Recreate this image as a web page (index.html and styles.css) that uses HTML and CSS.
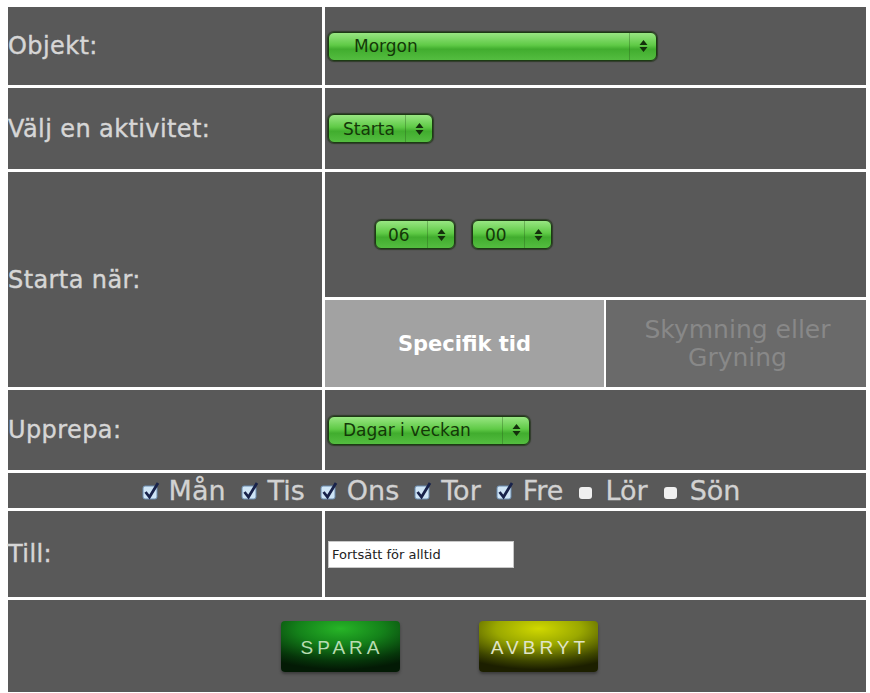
FILE: index.html
```html
<!DOCTYPE html>
<html lang="sv">
<head>
  <meta charset="UTF-8">
  <title>Schema</title>
  <link rel="stylesheet" href="styles.css">
</head>
<body>
  <div id="schedule">

    <div class="cell label">Objekt:</div>
    <div class="cell field">
      <div class="pick pick-wide"><span class="pick-text">Morgon</span><span class="pick-arrows"><svg width="9" height="14" viewBox="0 0 9 14"><path d="M4.5 1 L8.5 6 H0.5Z M4.5 13 L8.5 8 H0.5Z" fill="#14300c"/></svg></span></div>
    </div>

    <div class="cell label">Välj en aktivitet:</div>
    <div class="cell field">
      <div class="pick pick-start"><span class="pick-text">Starta</span><span class="pick-arrows"><svg width="9" height="14" viewBox="0 0 9 14"><path d="M4.5 1 L8.5 6 H0.5Z M4.5 13 L8.5 8 H0.5Z" fill="#14300c"/></svg></span></div>
    </div>

    <div class="cell label">Starta när:</div>
    <div class="when">
      <div class="cell time">
        <div class="pick pick-time"><span class="pick-text">06</span><span class="pick-arrows"><svg width="9" height="14" viewBox="0 0 9 14"><path d="M4.5 1 L8.5 6 H0.5Z M4.5 13 L8.5 8 H0.5Z" fill="#14300c"/></svg></span></div>
        <div class="pick pick-time"><span class="pick-text">00</span><span class="pick-arrows"><svg width="9" height="14" viewBox="0 0 9 14"><path d="M4.5 1 L8.5 6 H0.5Z M4.5 13 L8.5 8 H0.5Z" fill="#14300c"/></svg></span></div>
      </div>
      <div class="tabs">
        <div class="tab tab-on">Specifik tid</div>
        <div class="tab tab-off">Skymning eller<br>Gryning</div>
      </div>
    </div>

    <div class="cell label">Upprepa:</div>
    <div class="cell field">
      <div class="pick pick-repeat"><span class="pick-text">Dagar i veckan</span><span class="pick-arrows"><svg width="9" height="14" viewBox="0 0 9 14"><path d="M4.5 1 L8.5 6 H0.5Z M4.5 13 L8.5 8 H0.5Z" fill="#14300c"/></svg></span></div>
    </div>

    <div class="cell days">
      <span class="day"><svg class="box" width="18" height="19" viewBox="0 0 18 19"><rect x="1" y="5" width="14" height="13" rx="2" fill="#cfe5f6" stroke="#6a8cb0"/><path d="M3.5 11 L7.5 16 L16 2" fill="none" stroke="#18224a" stroke-width="2.8"/></svg>Mån</span>
      <span class="day"><svg class="box" width="18" height="19" viewBox="0 0 18 19"><rect x="1" y="5" width="14" height="13" rx="2" fill="#cfe5f6" stroke="#6a8cb0"/><path d="M3.5 11 L7.5 16 L16 2" fill="none" stroke="#18224a" stroke-width="2.8"/></svg>Tis</span>
      <span class="day"><svg class="box" width="18" height="19" viewBox="0 0 18 19"><rect x="1" y="5" width="14" height="13" rx="2" fill="#cfe5f6" stroke="#6a8cb0"/><path d="M3.5 11 L7.5 16 L16 2" fill="none" stroke="#18224a" stroke-width="2.8"/></svg>Ons</span>
      <span class="day"><svg class="box" width="18" height="19" viewBox="0 0 18 19"><rect x="1" y="5" width="14" height="13" rx="2" fill="#cfe5f6" stroke="#6a8cb0"/><path d="M3.5 11 L7.5 16 L16 2" fill="none" stroke="#18224a" stroke-width="2.8"/></svg>Tor</span>
      <span class="day"><svg class="box" width="18" height="19" viewBox="0 0 18 19"><rect x="1" y="5" width="14" height="13" rx="2" fill="#cfe5f6" stroke="#6a8cb0"/><path d="M3.5 11 L7.5 16 L16 2" fill="none" stroke="#18224a" stroke-width="2.8"/></svg>Fre</span>
      <span class="day"><svg class="box" width="18" height="19" viewBox="0 0 18 19"><rect x="1" y="6" width="13" height="12" rx="3" fill="#f0f0f0"/></svg>Lör</span>
      <span class="day"><svg class="box" width="18" height="19" viewBox="0 0 18 19"><rect x="1" y="6" width="13" height="12" rx="3" fill="#f0f0f0"/></svg>Sön</span>
    </div>

    <div class="cell label">Till:</div>
    <div class="cell field">
      <div class="until">Fortsätt för alltid</div>
    </div>

    <div class="cell actions">
      <div class="btn btn-save">SPARA</div>
      <div class="btn btn-cancel">AVBRYT</div>
    </div>

  </div>
</body>
</html>
```

FILE: styles.css
```css
body {
  margin: 0;
  padding: 0;
  background-color: white;
  font-family: "DejaVu Sans", Verdana, sans-serif;
}

#schedule {
  display: grid;
  grid-template-columns: 314px 541px;
  grid-template-rows: 78px 81px 215px 80px 35px 86px 92px;
  gap: 3px;
  padding: 7px 0 0 8px;
}

.cell {
  background-color: #595959;
}

.label {
  display: flex;
  align-items: center;
  font-size: 24px;
  letter-spacing: 0.4px;
  color: #d6d6d6;
  -webkit-text-stroke: 0.4px #d6d6d6;
}

.field {
  display: flex;
  align-items: center;
  padding-left: 3px;
}

/* green mac style dropdowns */
.pick {
  display: flex;
  align-items: center;
  height: 27px;
  border: 1px solid #1d3a14;
  border-radius: 6px;
  background: linear-gradient(#98e682 0%, #5fca46 45%, #41ad2e 60%, #54bd40 100%);
  box-shadow: 0 0 1px 1px rgba(20, 40, 10, 0.6);
  color: #143808;
  font-size: 17px;
}

.pick-text {
  flex: 1;
  padding-left: 14px;
}

.pick-arrows {
  display: flex;
  align-items: center;
  justify-content: center;
  width: 26px;
  height: 100%;
  border-left: 1px solid rgba(40, 90, 25, 0.35);
}

.pick-wide {
  width: 327px;
}

.pick-wide .pick-text {
  padding-left: 25px;
}

.pick-start {
  width: 103px;
}

.pick-time {
  width: 78px;
}

.pick-time .pick-text {
  padding-left: 12px;
}

.pick-repeat {
  width: 200px;
}

.when {
  display: grid;
  grid-template-rows: 125px 87px;
  gap: 3px;
}

.time {
  display: flex;
  align-items: center;
  gap: 17px;
  padding-left: 50px;
}

.tabs {
  display: grid;
  grid-template-columns: 279px 260px;
  gap: 2px;
}

.tab {
  display: flex;
  align-items: center;
  justify-content: center;
  text-align: center;
}

.tab-on {
  background-color: #a2a2a2;
  color: white;
  font-size: 21px;
  font-weight: bold;
}

.tab-off {
  background-color: #6a6a6a;
  color: #888888;
  font-size: 25px;
  line-height: 28px;
  padding-left: 3px;
}

.days {
  grid-column: 1 / 3;
  display: flex;
  align-items: center;
  justify-content: center;
  gap: 15px;
  padding-left: 8px;
  font-size: 27px;
  color: #d2d2d2;
  -webkit-text-stroke: 0.3px #d2d2d2;
}

.day {
  display: flex;
  align-items: center;
  gap: 9px;
}

.box {
  flex-shrink: 0;
}

.until {
  width: 181px;
  height: 25px;
  background-color: white;
  border: 1px solid #c8c8c8;
  display: flex;
  align-items: center;
  padding-left: 3px;
  font-size: 13px;
  color: #222;
}

.actions {
  grid-column: 1 / 3;
  display: flex;
  align-items: center;
  justify-content: center;
  gap: 79px;
  padding-left: 4px;
}

.btn {
  width: 119px;
  height: 51px;
  border-radius: 4px;
  display: flex;
  align-items: center;
  justify-content: center;
  padding-top: 3px;
  box-sizing: border-box;
  font-family: "Liberation Sans", Arial, sans-serif;
  font-size: 19px;
  letter-spacing: 4px;
  text-indent: 4px;
  box-shadow: 0 2px 3px rgba(0, 0, 0, 0.35);
}

.btn-save {
  background: radial-gradient(ellipse 90% 80% at 50% 15%, #27b527 0%, #14821a 40%, #06360a 80%, #031a05 100%);
  color: #b9dcb2;
}

.btn-cancel {
  background: radial-gradient(ellipse 90% 80% at 50% 15%, #d0d800 0%, #9aa800 40%, #3e4600 80%, #1c1f00 100%);
  color: #e0e4c8;
}
```
